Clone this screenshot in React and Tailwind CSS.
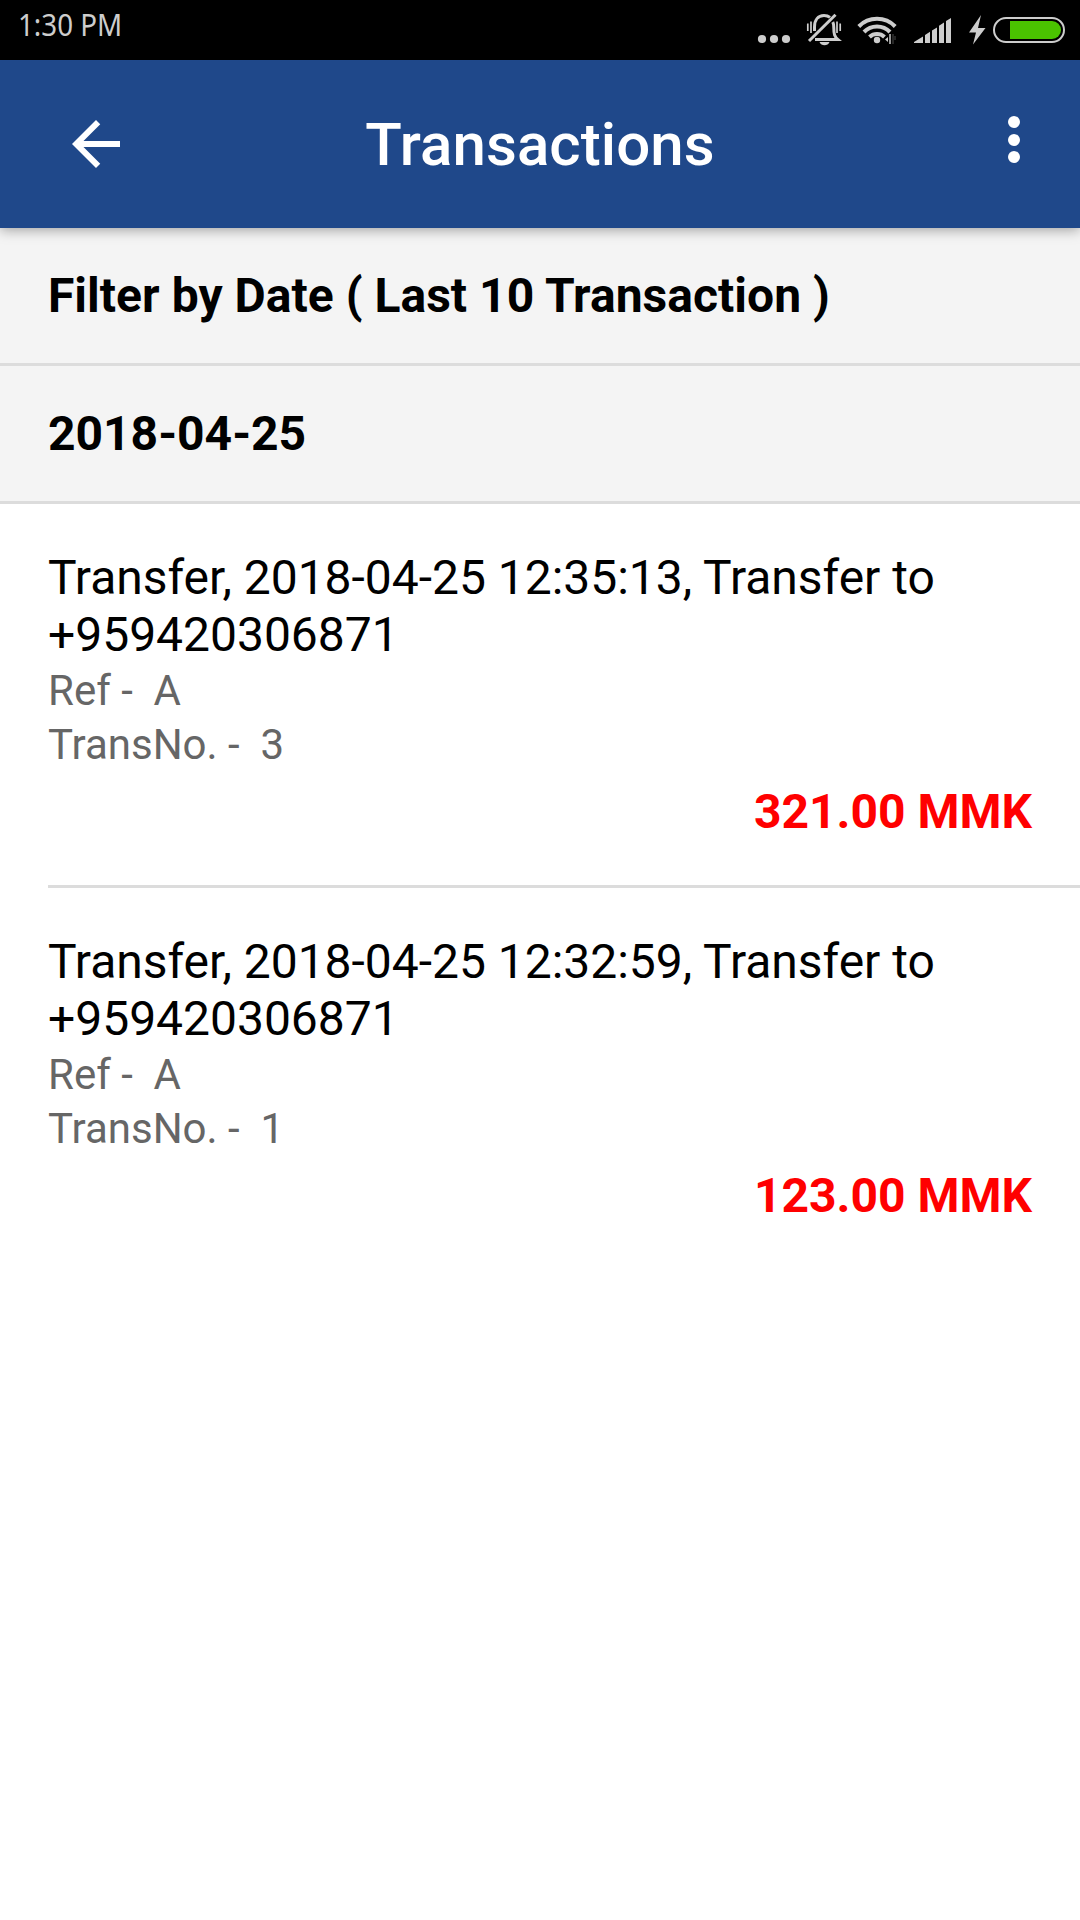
function StatusIcons() {
  return (
    <div className="flex h-[60px] items-center text-[#cdcdcd]">
      <svg width="34" height="60" viewBox="757 0 34 60" fill="currentColor">
        <circle cx="762" cy="39" r="4.1" />
        <circle cx="774" cy="39" r="4.1" />
        <circle cx="786" cy="39" r="4.1" />
      </svg>
      <svg className="ml-[14px]" width="38" height="60" viewBox="805 0 38 60" fill="none" stroke="currentColor">
        <path d="M814.500 31V27C814.500 20 818 15.500 824 15.500C826.500 15.500 828.500 16.200 830 17.400M832.800 22C833.800 24 833.800 26 833.800 28C833.800 34 834.500 36.500 838 39.600H815" strokeWidth="3" />
        <path d="M809 41L835.500 14.800" strokeWidth="3" />
        <path d="M819.500 42H829.500C828 46.300 821 46.300 819.500 42Z" fill="currentColor" stroke="none" />
        <path d="M807.800 23.500V31M811 21.500V33M837 21.500V33M840.200 23.500V31" strokeWidth="1.700" />
      </svg>
      <svg className="ml-[14px]" width="40" height="60" viewBox="857 0 40 60" fill="none" stroke="currentColor">
        <path d="M858.800 26.500A25.500 25.500 0 0 1 895.200 26.500" strokeWidth="4" />
        <path d="M864 32A18 18 0 0 1 890 32" strokeWidth="4" />
        <path d="M869.500 37A11 11 0 0 1 884.500 37" strokeWidth="4" />
        <circle cx="877" cy="40" r="3.200" fill="currentColor" stroke="none" />
        <path d="M890 34V44" strokeWidth="1.500" />
        <path d="M885 39.500L888 37V42Z" fill="currentColor" stroke="none" />
        <path d="M893 34V44M895 36V40" stroke="#333" strokeWidth="1.500" />
      </svg>
      <svg className="ml-[16px]" width="40" height="60" viewBox="913 0 40 60" fill="currentColor">
        <path d="M914 43V42L923 36.500V43ZM925 43V35L930 31.800V43ZM932 43V30.500L937 27.500V43ZM939 43V25.700L944 22.500V43ZM946 43V21L951 18V43Z" />
      </svg>
      <svg className="ml-[14px]" width="20" height="60" viewBox="967 0 20 60" fill="currentColor">
        <path d="M981 15L969 32.500H976L973 44.500L985.500 28H978Z" />
      </svg>
      <svg className="ml-[5px]" width="74" height="60" viewBox="992 0 74 60" fill="none">
        <rect x="994" y="18" width="70" height="24" rx="12" stroke="currentColor" strokeWidth="2" />
        <path d="M1010 21H1052A9 9 0 0 1 1052 39H1010Z" fill="#4ac400" />
      </svg>
    </div>
  );
}

function SectionRow({ children }) {
  return (
    <div className="flex h-[138px] items-center border-b-3 border-[#dcdcdc] bg-[#f4f4f4] px-12 text-[48px] leading-[57px] font-bold">
      {children}
    </div>
  );
}

function Transaction({ time, number, amount, last }) {
  return (
    <li className={last ? "ml-12 py-[45px] pr-12" : "ml-12 border-b-3 border-[#dcdcdc] py-[45px] pr-12"}>
      <p className="text-[48px] leading-[57px] tracking-[-0.02px]">
        Transfer, 2018-04-25 {time}, Transfer to
        <br />
        +959420306871
      </p>
      <div className="mt-px text-[42px] leading-[54px] whitespace-pre text-[#666666]">
        <p>{"Ref -  A"}</p>
        <p>{"TransNo. -  " + number}</p>
      </div>
      <p className="mt-[11px] text-right text-[48px] leading-[57px] font-bold text-[#ff0000]">{amount} MMK</p>
    </li>
  );
}

export default function App() {
  return (
    <div className="min-h-[1920px] w-[1080px] bg-white font-['Roboto',sans-serif] text-black">
      <div className="flex h-[60px] justify-between bg-black pr-[14px] pl-[18px]">
        <span className="origin-left scale-x-[0.925] pt-[5px] font-['Noto_Sans',sans-serif] text-[30px] leading-[40px] text-[#cdcdcd]">
          1:30 PM
        </span>
        <StatusIcons />
      </div>
      <header className="relative grid h-[168px] grid-cols-[132px_1fr_132px] items-center bg-[#1f488a] text-white shadow-[0_2px_12px_rgba(0,0,0,0.35)]">
        <button aria-label="Back" className="ml-[60px]">
          <svg width="72" height="72" viewBox="0 0 24 24" fill="currentColor">
            <path d="M20 11H7.830l5.590-5.590L12 4l-8 8 8 8 1.410-1.410L7.830 13H20v-2z" />
          </svg>
        </button>
        <h1 className="pt-[2px] text-center text-[60px] leading-[70px] font-medium tracking-[0.1px]">Transactions</h1>
        <button aria-label="More" className="mb-[9px] flex flex-col items-center gap-[5.500px]">
          <span className="size-3 rounded-full bg-white" />
          <span className="size-3 rounded-full bg-white" />
          <span className="size-3 rounded-full bg-white" />
        </button>
      </header>
      <main>
        <SectionRow>
          <span className="tracking-[0.03px]">Filter by Date ( Last 10 Transaction )</span>
        </SectionRow>
        <SectionRow>2018-04-25</SectionRow>
        <ul>
          <Transaction time="12:35:13" number="3" amount="321.00" />
          <Transaction time="12:32:59" number="1" amount="123.00" last />
        </ul>
      </main>
    </div>
  );
}
